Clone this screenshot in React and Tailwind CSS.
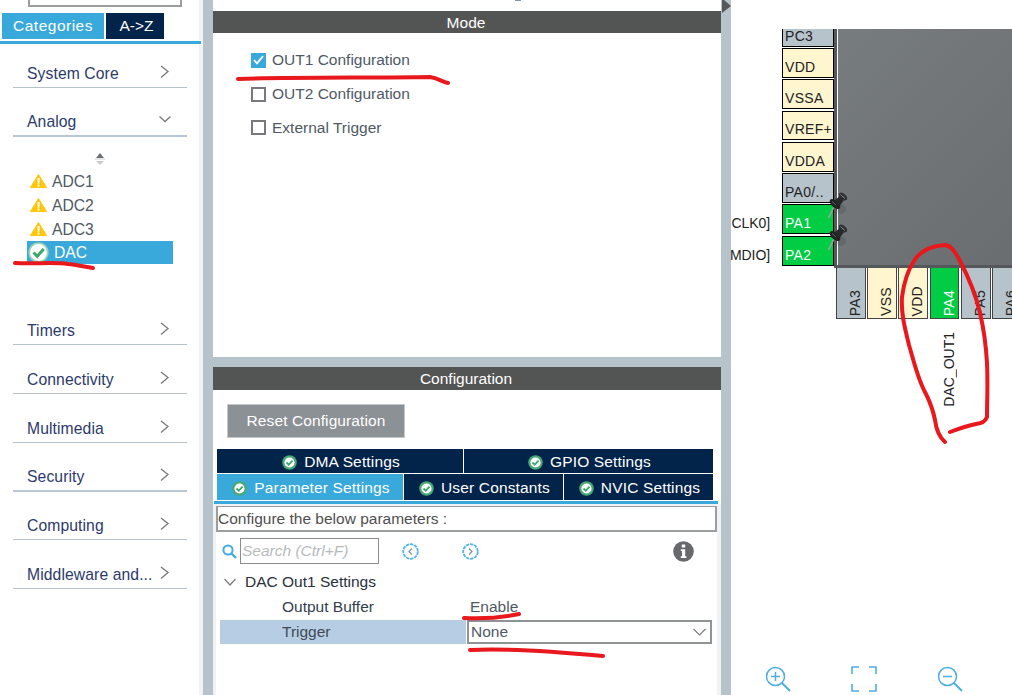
const BLUE = '#39a9dc';

function Chevron({ down = false }) {
  return (
    <svg width="12" height="14" viewBox="0 0 12 14" fill="none" stroke="#77797c" strokeWidth="1.3" className="shrink-0">
      {down ? <path d="M0.5 3.5 L6 8.5 L11.5 3.5" /> : <path d="M2 1 L9 6.5 L2 12.5" />}
    </svg>
  );
}

function WarnIcon() {
  return (
    <svg width="17" height="14" viewBox="0 0 17 14" className="shrink-0">
      <path d="M8.5 0.5 L16.5 13.5 L0.5 13.5 Z" fill="#fdc60a" stroke="#fdc60a" strokeLinejoin="round" />
      <rect x="7.6" y="4" width="1.9" height="5.6" fill="#fff" />
      <rect x="7.6" y="10.6" width="1.9" height="1.9" fill="#fff" />
    </svg>
  );
}

function CheckBadge({ size = 14 }) {
  return (
    <svg width={size} height={size} viewBox="0 0 20 20" className="shrink-0">
      <circle cx="10" cy="10" r="9.7" fill="#9fd3b5" />
      <circle cx="10" cy="10" r="8" fill="#fff" />
      <path d="M5.2 10 L8.8 13.6 L15 6.6" fill="none" stroke="#3da66b" strokeWidth="2.8" />
    </svg>
  );
}

function TabBadge() {
  return (
    <svg width="15" height="15" viewBox="0 0 20 20" className="shrink-0">
      <circle cx="10" cy="10" r="9.7" fill="#46a874" />
      <circle cx="10" cy="10" r="6.8" fill="#fff" />
      <path d="M6 10 L9 13 L14 7.4" fill="none" stroke="#3da66b" strokeWidth="2.4" />
    </svg>
  );
}

function NavCircle({ right = false }) {
  return (
    <svg width="17" height="17" viewBox="0 0 17 17" fill="none" stroke="#55b4e4" className="shrink-0">
      <circle cx="8.5" cy="8.5" r="7.3" strokeWidth="1.8" strokeDasharray="3.4 0.8" />
      <path d={right ? 'M7 5.5 L10 8.5 L7 11.5' : 'M10 5.5 L7 8.5 L10 11.5'} stroke="#7d8a94" strokeWidth="1.1" />
    </svg>
  );
}

function ZoomIcon({ minus = false }) {
  return (
    <svg width="26" height="26" viewBox="0 0 26 26" fill="none" stroke="#4cafe2" strokeWidth="1.5">
      <circle cx="10.5" cy="10.5" r="9" />
      <path d="M17 17 L25 25" strokeWidth="2" />
      <path d="M6 10.5 H15" />
      {!minus && <path d="M10.5 6 V15" />}
    </svg>
  );
}

function FitIcon() {
  return (
    <svg width="26" height="26" viewBox="0 0 26 26" fill="none" stroke="#4cafe2" strokeWidth="1.6">
      <path d="M1 8 V1 H8 M18 1 H25 V8 M25 18 V25 H18 M8 25 H1 V18" />
    </svg>
  );
}

function Pushpin({ className = '' }) {
  return (
    <svg width="24" height="28" viewBox="0 0 24 28" className={className}>
      <ellipse cx="15" cy="17" rx="5" ry="5" fill="#000" opacity="0.1" />
      <path d="M2.5 26 L8 15" stroke="#a2a4a6" strokeWidth="1.6" />
      <ellipse cx="9" cy="12" rx="6.5" ry="3.4" transform="rotate(42 9 12)" fill="#1f2123" />
      <path d="M9 8 L14 4 L18 8 L13 15 Z" fill="#26282a" />
      <ellipse cx="17" cy="4.5" rx="4.8" ry="2.8" transform="rotate(42 17 4.5)" fill="#2c2e30" />
      <path d="M14.5 2.5 L19 6.5" stroke="#8b8e90" strokeWidth="1" />
      <path d="M6 9.5 L10 13" stroke="#63666a" strokeWidth="1" />
    </svg>
  );
}

function CategoryRow({ label, open = false, height = 'h-[49px]', line = 'border-b border-[#b7c3cb]' }) {
  return (
    <div className={`flex items-end justify-between pl-[14px] pr-[16px] pb-[3px] ${height} ${line}`}>
      <span className="text-[15.7px] leading-[20px] tracking-[0.1px] text-[#2c3a6b]">{label}</span>
      <span className="mb-[5px]">
        <Chevron down={open} />
      </span>
    </div>
  );
}

function Sidebar() {
  return (
    <aside className="w-[203px] shrink-0 flex flex-col bg-white border-r-4 border-[#f0f2f3]">
      <div className="ml-[28px] w-[154px] h-[7px] border-2 border-t-0 border-[#9a9ea1]" />
      <div className="flex gap-[2px] ml-[2px] mt-[6px] h-[26px]">
        <div className="w-[102px] flex items-center justify-center text-white text-[15.5px] tracking-[0.5px] bg-[#39a9dc]">Categories</div>
        <div className="w-[58px] flex items-center justify-center pl-[3px] text-white text-[15.5px] bg-[#02234a]">A-&gt;Z</div>
      </div>
      <div className="mt-[1px] -mr-[2px] h-[3px] bg-[#39a9dc] border-t border-white box-content relative" />
      <div className="pl-[13px] pr-[12px] flex flex-col">
        <CategoryRow label="System Core" height="h-[44px]" />
        <CategoryRow label="Analog" open line="border-b-2 border-[#b9c7d6]" />
        <div className="h-[159px] pt-[15px] flex flex-col">
          <div className="self-center mb-[3px] flex flex-col items-center">
            <svg width="10" height="14" viewBox="0 0 10 14">
              <path d="M5 1 L9 6 H1 Z" fill="#6d7073" />
              <path d="M0 7 H10" stroke="#c9cdd0" />
              <path d="M5 13 L9 9 H1 Z" fill="#c9cdd0" />
            </svg>
          </div>
          <div className="pl-[17px] flex flex-col">
            {['ADC1', 'ADC2', 'ADC3'].map((name) => (
              <div key={name} className="h-[24px] flex items-center gap-[5px] text-[15.7px] text-[#4f5965]">
                <WarnIcon />
                <span className="pt-px">{name}</span>
              </div>
            ))}
          </div>
          <div className="ml-[14px] w-[146px] h-[23px] flex items-center gap-[5px] text-[15.7px] text-white bg-[#39a9dc] pl-[1px]">
            <CheckBadge size={21} />
            DAC
          </div>
        </div>
        <CategoryRow label="Timers" />
        <CategoryRow label="Connectivity" />
        <CategoryRow label="Multimedia" />
        <CategoryRow label="Security" line="border-b-2 border-[#b9c7d6]" />
        <CategoryRow label="Computing" height="h-[48px]" />
        <CategoryRow label="Middleware and..." />
      </div>
    </aside>
  );
}

function PanelHeader({ children, height }) {
  return (
    <div className={`${height} shrink-0 flex items-center justify-center pt-px pr-[2px] bg-[#535554] text-white text-[15.5px]`}>{children}</div>
  );
}

function CheckOption({ label, checked = false, height = 'h-[34px]' }) {
  return (
    <div className={`flex items-center gap-[6px] ${height} text-[15.5px] text-[#4f5965]`}>
      {checked ? (
        <span className="w-[15px] h-[15px] bg-[#39a9dc] flex items-center justify-center">
          <svg width="11" height="10" viewBox="0 0 11 10" fill="none" stroke="#fff" strokeWidth="1.8">
            <path d="M1 5 L4 8.3 L10 1.2" />
          </svg>
        </span>
      ) : (
        <span className="w-[15px] h-[15px] border-2 border-[#77797c] bg-white" />
      )}
      <span>{label}</span>
    </div>
  );
}

function SettingsTab({ label, active = false, className = '' }) {
  return (
    <div className={`flex items-center justify-center gap-[7px] pt-[2px] pl-[2px] text-white text-[15.5px] tracking-[0.15px] ${active ? 'bg-[#39a9dc]' : 'bg-[#02234a]'} ${className}`}>
      <TabBadge />
      {label}
    </div>
  );
}

function ModePanel() {
  return (
    <section className="relative h-[357px] shrink-0 flex flex-col bg-white pt-[11px]">
      <div className="absolute left-[302px] top-0 w-[6px] h-px bg-[#7e93a8]" />
      <PanelHeader height="h-[22px]">Mode</PanelHeader>
      <div className="pl-[38px] pt-[10px] flex flex-col">
        <CheckOption label="OUT1 Configuration" checked />
        <CheckOption label="OUT2 Configuration" />
        <CheckOption label="External Trigger" height="h-[33px]" />
      </div>
    </section>
  );
}

function ConfigPanel() {
  return (
    <section className="flex-1 flex flex-col bg-white">
      <PanelHeader height="h-[23px]">Configuration</PanelHeader>
      <div className="pl-[14px] pt-[14px]">
        <button type="button" className="w-[178px] h-[34px] bg-[#8c9196] border border-[#c4c8cb] text-white text-[15.5px] tracking-[0.1px]">
          Reset Configuration
        </button>
      </div>
      <div className="ml-[4px] mr-[8px] mt-[11px] flex flex-col gap-px">
        <div className="flex h-[24px] gap-px">
          <SettingsTab label="DMA Settings" className="w-[246px]" />
          <SettingsTab label="GPIO Settings" className="flex-1" />
        </div>
        <div className="flex h-[26px] gap-px">
          <SettingsTab label="Parameter Settings" active className="w-[186px]" />
          <SettingsTab label="User Constants" className="w-[159px]" />
          <SettingsTab label="NVIC Settings" className="flex-1" />
        </div>
      </div>
      <div className="mt-[1px] ml-px mr-[3px] h-[3px] bg-[#39a9dc]" />
      <div className="flex-1 px-[3px] pr-[4px] pt-[2px] bg-[#f0f2f3] flex flex-col">
        <div className="flex-1 bg-white flex flex-col">
          <div className="h-[26px] border-2 border-t border-[#9a9ea1] flex items-center pt-px text-[15.5px] text-[#4f4f50]">
            Configure the below parameters :
          </div>
          <div className="h-[32px] mt-[3px] flex items-center pl-[6px] pr-[23px]">
            <svg width="15" height="15" viewBox="0 0 15 15" fill="none" stroke="#43ace0" strokeWidth="2" className="shrink-0">
              <circle cx="6" cy="6" r="4.6" />
              <path d="M9.5 9.5 L14 14" strokeWidth="2.4" />
            </svg>
            <div className="ml-[3px] w-[139px] h-[26px] border border-[#8a8d90] flex items-center pl-px text-[15.5px] italic text-[#b8bbbd]">
              Search (Ctrl+F)
            </div>
            <span className="ml-[23px]"><NavCircle /></span>
            <span className="ml-[43px]"><NavCircle right /></span>
            <svg width="21" height="21" viewBox="0 0 21 21" className="ml-auto shrink-0">
              <circle cx="10.5" cy="10.5" r="10.3" fill="#666a6d" />
              <rect x="8.8" y="3.5" width="3.4" height="3" fill="#fff" />
              <path d="M7.8 8.2 H12.2 V15.2 H13.4 V17 H7.8 V15.2 H9 V10 H7.8 Z" fill="#fff" />
            </svg>
          </div>
          <div className="mt-[2px] h-[25px] flex items-center gap-[9px] pl-[8px] text-[15.5px] text-[#29313b]">
            <svg width="12" height="8" viewBox="0 0 12 8" fill="none" stroke="#7b7e81" strokeWidth="1.3">
              <path d="M0.5 1 L6 7 L11.5 1" />
            </svg>
            DAC Out1 Settings
          </div>
          <div className="h-[26px] flex items-center text-[15.5px] text-[#4f5965]">
            <span className="w-[254px] pl-[66px] text-[#33404d]">Output Buffer</span>
            Enable
          </div>
          <div className="h-[24px] flex items-stretch text-[15.5px] ml-[4px] mr-[5px]">
            <div className="w-[246px] bg-[#b7cde3] pl-[62px] flex items-center text-[#3f4a55]">Trigger</div>
            <div className="flex-1 ml-px border-2 border-[#8f9396] flex items-center justify-between pl-[2px] pr-[4px] text-[#4f5965]">
              None
              <svg width="13" height="8" viewBox="0 0 13 8" fill="none" stroke="#7b7e81" strokeWidth="1.2">
                <path d="M0.5 1 L6.5 7 L12.5 1" />
              </svg>
            </div>
          </div>
        </div>
      </div>
    </section>
  );
}

const leftPins = [
  { name: 'PC3', cls: 'h-[18px] bg-[#b7c3cb] text-[#222] border-t-0 items-start' },
  { name: 'VDD', cls: 'h-[30px] bg-[#fff5cf] text-[#222] mt-[1px]' },
  { name: 'VSSA', cls: 'h-[30px] bg-[#fff5cf] text-[#222] mt-[1px]' },
  { name: 'VREF+', cls: 'h-[29px] bg-[#fff5cf] text-[#222] mt-[2px]' },
  { name: 'VDDA', cls: 'h-[30px] bg-[#fff5cf] text-[#222] mt-[2px]' },
  { name: 'PA0/..', cls: 'h-[30px] bg-[#b7c3cb] text-[#222] mt-[1px]' },
  { name: 'PA1', label: 'CLK0]', cls: 'h-[30px] bg-[#00cc44] text-white mt-[1px]' },
  { name: 'PA2', label: 'MDIO]', cls: 'h-[30px] bg-[#00cc44] text-white mt-[2px]' },
];

const bottomPins = [
  { name: 'PA3', cls: 'w-[30px] bg-[#b7c3cb] text-[#222]' },
  { name: 'VSS', cls: 'w-[30px] bg-[#fff5cf] text-[#222] ml-[1px]' },
  { name: 'VDD', cls: 'w-[30px] bg-[#fff5cf] text-[#222] ml-[1px]' },
  { name: 'PA4', cls: 'w-[29px] bg-[#00cc44] text-white ml-[2px]' },
  { name: 'PA5', cls: 'w-[30px] bg-[#b7c3cb] text-[#222] ml-[2px]' },
  { name: 'PA6', cls: 'w-[30px] bg-[#b7c3cb] text-[#222] ml-[1px]' },
];

function ChipCanvas() {
  return (
    <div className="relative flex-1 bg-white overflow-hidden">
      <div className="absolute left-[51px] top-[29px] w-[52px] flex flex-col">
        {leftPins.map((pin) => (
          <div key={pin.name} className={`relative flex items-end pl-[2px] pb-[2px] border border-black text-[14px] leading-[15px] tracking-[0.3px] ${pin.cls}`}>
            {pin.name}
            {pin.label && (
              <span className="absolute right-[63px] bottom-[2px] text-[14px] leading-[15px] tracking-[-0.1px] text-[#222]">{pin.label}</span>
            )}
          </div>
        ))}
      </div>
      <div className="absolute left-[103px] top-[29px] w-[300px] h-[239px] border-l-[3px] border-b-[3px] border-[#55585a] bg-[linear-gradient(135deg,#777c7e,#66696b)]">
        <div className="w-px h-full bg-white" />
      </div>
      <div className="absolute left-[105px] top-[268px] h-[51px] flex">
        {bottomPins.map((pin) => (
          <div key={pin.name} className={`flex items-end justify-center pl-[9px] border border-t-0 border-[#444] pt-[2px] ${pin.cls}`}>
            <span className="[writing-mode:vertical-rl] rotate-180 text-[14px] leading-[15px] pt-[2px] tracking-[0.3px]">{pin.name}</span>
          </div>
        ))}
      </div>
      <span className="absolute left-[210px] top-[332px] [writing-mode:vertical-rl] rotate-180 text-[14px] leading-[16px] text-[#222]">DAC_OUT1</span>
      <Pushpin className="absolute left-[95px] top-[192px]" />
      <Pushpin className="absolute left-[95px] top-[224px]" />
      <div className="absolute left-[34px] bottom-[3px] w-[198px] flex justify-between">
        <ZoomIcon />
        <FitIcon />
        <ZoomIcon minus />
      </div>
    </div>
  );
}

function RedMarks() {
  return (
    <svg width="1012" height="695" viewBox="0 0 1012 695" fill="none" stroke="#e8181c" strokeWidth="4" strokeLinecap="round" strokeLinejoin="round" className="absolute left-0 top-0 pointer-events-none">
      <path d="M15 263 C35 264 55 262 68 264 C78 265 85 267 93 268" />
      <path d="M238 79 C290 77 370 78 430 77 C438 78 442 82 448 83" />
      <path d="M464 618 C485 619 505 617 519 614" />
      <path d="M470 650 C510 648 560 652 603 656" />
      <path d="M945 442 C938 436 936 428 935 420 C933 410 930 402 926 394 C918 380 914 362 909 345 C904 325 901 312 902 297 C904 282 908 270 914 261 C920 251 930 246 945 245 C952 246 955 252 959 259 C969 278 976 295 980 313 C984 330 986 345 987 363 C988 385 987 400 987 417 C985 422 982 423 976 424 C966 426 958 429 950 432" />
    </svg>
  );
}

export default function App() {
  return (
    <div className="relative w-[1012px] h-[695px] flex overflow-hidden bg-[#b7c3cb] font-['Liberation_Sans',Arial,sans-serif]">
      <Sidebar />
      <div className="w-[10px] shrink-0" />
      <main className="w-[508px] shrink-0 flex flex-col gap-[10px]">
        <ModePanel />
        <ConfigPanel />
      </main>
      <div className="w-[10px] shrink-0 relative">
        <svg width="9" height="13" viewBox="0 0 9 13" className="absolute left-px top-0">
          <path d="M0 0 H2 L9 6 L0 13 Z" fill="#55585a" />
        </svg>
      </div>
      <ChipCanvas />
      <RedMarks />
    </div>
  );
}
